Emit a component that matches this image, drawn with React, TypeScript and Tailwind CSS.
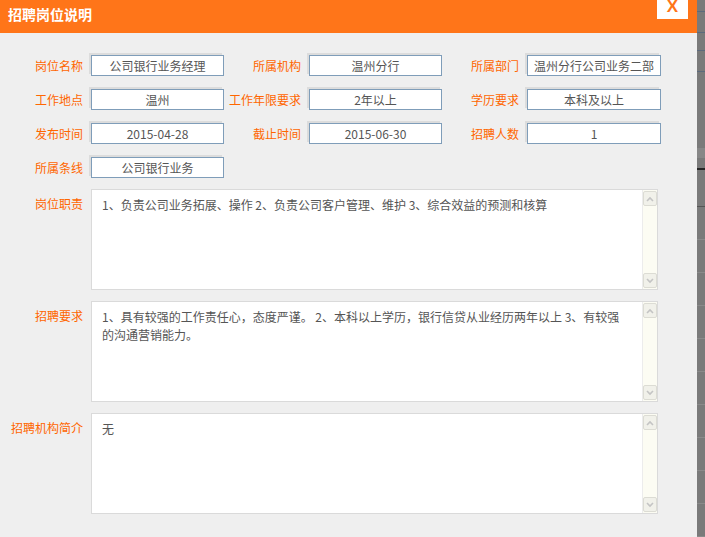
import React from "react";

const font = "font-['Noto_Sans_CJK_SC','Noto_Sans',sans-serif]";

const Input = ({ value, w }: { value: string; w: string }) => (
  <div
    className={`${w} h-[21px] shrink-0 border border-[#7f9db9] bg-white text-center text-[12px] leading-[19px] text-[#555] overflow-hidden whitespace-nowrap shadow-[-2px_-2px_0_0_#dcdcdc]`}
  >
    {value}
  </div>
);

const Label = ({ text, w }: { text: string; w: string }) => (
  <div className={`${w} shrink-0 pr-[8px] text-right text-[12px] leading-[21px] text-[#ff6600] whitespace-nowrap`}>
    {text}
  </div>
);

const Chevron = ({ up }: { up?: boolean }) => (
  <svg width="8" height="6" viewBox="0 0 8 6">
    <path
      d={up ? "M1 5 L4 2 L7 5" : "M1 1 L4 4 L7 1"}
      fill="none"
      stroke="#c4c4c4"
      strokeWidth="1.6"
    />
  </svg>
);

const TextBox = ({ label, text }: { label: string; text: string }) => (
  <div className="flex">
    <div className="w-[91px] shrink-0 pr-[8px] mt-[7px] text-right text-[12px] leading-[16px] text-[#ff6600] whitespace-nowrap">
      {label}
    </div>
    <div className="w-[567px] h-[101px] border border-[#dadada] bg-white flex">
      <div className="flex-1 pl-[10px] pr-[14px] pt-[6px] text-[12px] leading-[18px] text-[#555]">
        {text}
      </div>
      <div className="w-[15px] bg-[#fcfcf3] border-l border-[#ececec] flex flex-col justify-between py-px pr-px">
        <div className="h-[15px] w-[14px] rounded-[2px] border border-[#dcdcd4] bg-[#f1f1ea] flex items-center justify-center">
          <Chevron up />
        </div>
        <div className="h-[15px] w-[14px] rounded-[2px] border border-[#dcdcd4] bg-[#f1f1ea] flex items-center justify-center">
          <Chevron />
        </div>
      </div>
    </div>
  </div>
);

const rows: [string, string][][] = [
  [
    ["岗位名称", "公司银行业务经理"],
    ["所属机构", "温州分行"],
    ["所属部门", "温州分行公司业务二部"],
  ],
  [
    ["工作地点", "温州"],
    ["工作年限要求", "2年以上"],
    ["学历要求", "本科及以上"],
  ],
  [
    ["发布时间", "2015-04-28"],
    ["截止时间", "2015-06-30"],
    ["招聘人数", "1"],
  ],
  [["所属条线", "公司银行业务"]],
];

export default function App() {
  return (
    <div className={`flex w-[705px] h-[537px] overflow-hidden ${font}`}>
      <div className="w-[697px] h-full bg-[#efefef] flex flex-col">
        <div className="h-[33px] bg-[#ff7519] flex justify-between items-start shrink-0">
          <div className="pl-[8px] pt-[6px] text-[14px] leading-[16px] font-bold text-white">
            招聘岗位说明
          </div>
          <div className="mr-[9px] w-[31px] h-[19px] bg-white overflow-hidden flex justify-center">
            <span className="font-['Liberation_Sans',sans-serif] text-[17px] font-bold leading-none text-[#ff7519] -mt-[2px]">
              X
            </span>
          </div>
        </div>

        <div className="pt-[22px] flex flex-col gap-[13px]">
          {rows.map((row, i) => (
            <div key={i} className="flex">
              {row.map(([l, v], j) => (
                <React.Fragment key={j}>
                  <Label text={l} w={j === 0 ? "w-[91px]" : "w-[85px]"} />
                  <Input value={v} w={j === 2 ? "w-[134px]" : "w-[133px]"} />
                </React.Fragment>
              ))}
            </div>
          ))}
        </div>

        <div className="pt-[11px] flex flex-col gap-[11px]">
          <TextBox
            label="岗位职责"
            text="1、负责公司业务拓展、操作 2、负责公司客户管理、维护 3、综合效益的预测和核算"
          />
          <TextBox
            label="招聘要求"
            text="1、具有较强的工作责任心，态度严谨。 2、本科以上学历，银行信贷从业经历两年以上 3、有较强的沟通营销能力。"
          />
          <TextBox label="招聘机构简介" text="无" />
        </div>
      </div>

      <div className="w-[8px] h-full bg-[#7a7a7a] flex flex-col">
        <div className="h-[11px]" />
        <div className="h-px bg-[#5c6a7c]" />
        <div className="h-[20px]" />
        <div className="h-px bg-[#5c6a7c]" />
        <div className="h-[17px]" />
        <div className="h-px bg-[#5c6a7c]" />
        <div className="h-[20px]" />
        <div className="h-px bg-[#5c6a7c]" />
        <div className="h-[76px]" />
        <div className="h-[10px] bg-[#878787]" />
        <div className="h-[10px]" />
        <div className="h-[2px] bg-[#262626]" />
        <div className="h-[36px]" />
        <div className="h-px bg-[#555]" />
        {Array.from({ length: 10 }).map((_, i) => (
          <div key={i} className="h-[33px] border-b border-[#8a8a8a]" />
        ))}
      </div>
    </div>
  );
}
